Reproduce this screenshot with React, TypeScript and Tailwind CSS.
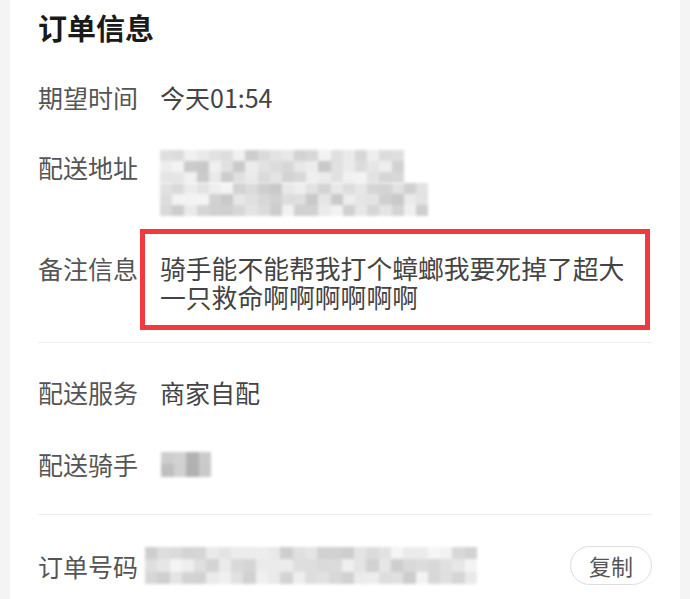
import React from 'react';

const font = { fontFamily: '"Noto Sans CJK SC", "Noto Sans", sans-serif' };

// 打码用的马赛克块，伪随机灰度
function Mosaic({ cols, rows, cell, cellH, seed, min = 200, max = 245 }: { cols: number; rows: number; cell: number; cellH?: number; seed: number; min?: number; max?: number }) {
    const cells = [];
    let s = seed;
    for (let i = 0; i < cols * rows; i++) {
        s = (s * 9301 + 49297) % 233280;
        const r = s / 233280;
        const v = Math.round(max - r * (max - min));
        cells.push(<div key={i} style={{ width: cell, height: cellH ?? cell, backgroundColor: `rgb(${v},${v},${v})` }} />);
    }
    return (
        <div className="flex flex-wrap blur-[1.5px]" style={{ width: cols * cell }}>
            {cells}
        </div>
    );
}

function Row({ label, children, className = '' }: { label: string; children?: React.ReactNode; className?: string }) {
    return (
        <div className={`flex items-center ${className}`}>
            <span className="w-[100px] shrink-0 text-[25px] leading-[34px] text-[#555]">{label}</span>
            {children}
        </div>
    );
}

export default function App() {
    return (
        <div className="flex min-h-[599px] w-[690px] bg-[#f4f4f4] pl-[10px] pr-[10px]" style={font}>
            <div className="flex-1 bg-white pl-[28px] pr-[28px]">
                <h2 className="mt-[9px] text-[29px] font-bold leading-[36px] text-[#1a1a1a]">订单信息</h2>

                <Row label="期望时间" className="mt-[35px]">
                    <span className="ml-[22px] text-[25px] leading-[34px] text-[#444]">今天01:54</span>
                </Row>

                <div className="mt-[36px] flex items-start">
                    <span className="w-[100px] shrink-0 text-[25px] leading-[34px] text-[#555]">配送地址</span>
                    <div className="ml-[22px] flex flex-col">
                        <Mosaic cols={20} rows={3} cell={12.2} cellH={11} seed={7} />
                        <Mosaic cols={22} rows={3} cell={12.2} cellH={11} seed={31} />
                    </div>
                </div>

                <div className="mt-[13px] flex items-start">
                    <span className="mt-[22px] w-[100px] shrink-0 text-[25px] leading-[34px] text-[#555]">备注信息</span>
                    <div className="ml-[2px] w-[510px] border-[5px] border-[#f03a3e] pb-[14px] pl-[15px] pr-[14px] pt-[19px]">
                        <p className="text-[25.8px] leading-[29px] text-[#444]">骑手能不能帮我打个蟑螂我要死掉了超大一只救命啊啊啊啊啊啊</p>
                    </div>
                </div>

                <div className="mt-[12px] h-px bg-[#eeeeee]" />

                <Row label="配送服务" className="mt-[32px]">
                    <span className="ml-[22px] text-[25px] leading-[34px] text-[#444]">商家自配</span>
                </Row>

                <Row label="配送骑手" className="mt-[38px]">
                    <div className="ml-[23px]">
                        <Mosaic cols={4} rows={2} cell={12.5} seed={3} min={175} max={220} />
                    </div>
                </Row>

                <div className="mt-[33px] h-px bg-[#eeeeee]" />

                <div className="mt-[31px] flex items-center">
                    <span className="w-[100px] shrink-0 text-[25px] leading-[34px] text-[#555]">订单号码</span>
                    <div className="ml-[7px]">
                        <Mosaic cols={27} rows={3} cell={12.3} seed={19} min={205} max={245} />
                    </div>
                    <button className="ml-auto h-[39px] w-[82px] rounded-full border border-[#dddddd] text-[22px] text-[#555]">复制</button>
                </div>
            </div>
        </div>
    );
}
